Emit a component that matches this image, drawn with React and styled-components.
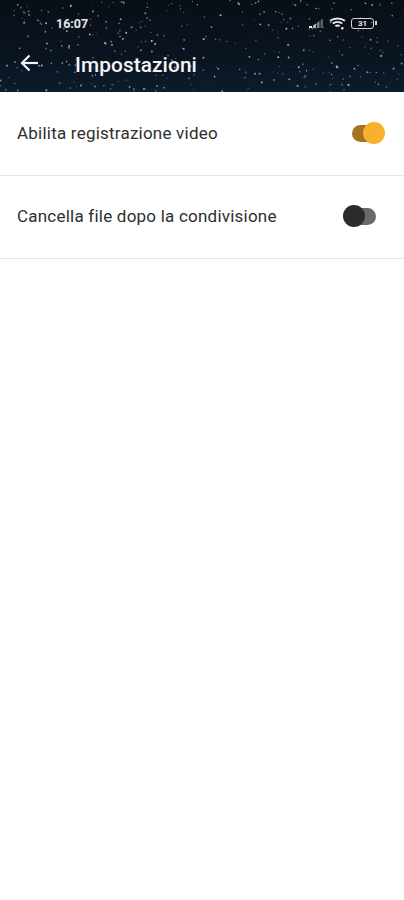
import React from "react"
import styled, { createGlobalStyle } from "styled-components"

const GlobalStyle = createGlobalStyle`
  html, body {
    margin: 0;
    padding: 0;
    background: #fff;
    font-family: "Roboto", "Liberation Sans", sans-serif;
  }
`
const Screen = styled.div`
  width: 404px;
  height: 900px;
  background: #fff;
  overflow: hidden;
`
const Header = styled.header`
  position: relative;
  height: 92px;
  overflow: hidden;
  background: linear-gradient(180deg, #090e16 0%, #0a1420 60%, #0c1b2d 100%);
  color: #fff;
`
const StarField = styled.svg`
  position: absolute;
  inset: 0;
  filter: blur(0.5px);
`
const StatusBar = styled.div`
  position: relative;
  height: 46px;
  padding: 0 30px 0 56px;
  display: flex;
  align-items: center;
  justify-content: space-between;
  box-sizing: border-box;
`
const Clock = styled.span`
  font-size: 12.5px;
  font-weight: 700;
  color: #e6e8ea;
`
const StatusIcons = styled.div`
  display: flex;
  align-items: center;
  gap: 5px;
`
const Battery = styled.div`
  width: 21px;
  height: 9px;
  border: 1.5px solid #d4d4d4;
  border-radius: 3px;
  font-size: 8px;
  line-height: 9px;
  font-weight: 700;
  text-align: center;
  color: #e4e4e4;
  position: relative;
  &::after {
    content: "";
    position: absolute;
    right: -4px;
    top: 2.5px;
    width: 2px;
    height: 4px;
    background: #d4d4d4;
  }
`
const Toolbar = styled.div`
  position: relative;
  display: flex;
  align-items: center;
  padding-left: 20px;
  gap: 36px;
  height: 34px;
`
const BackButton = styled.svg`
  display: block;
  flex: none;
`
const Title = styled.h1`
  margin: 3px 0 0;
  font-size: 20.8px;
  font-weight: 500;
  letter-spacing: 0.1px;
  color: #f4f4f4;
`
const List = styled.div`
  padding-top: 1px;
`
const Row = styled.div`
  height: 83px;
  box-sizing: border-box;
  padding: 0 28px 2px 17px;
  display: flex;
  align-items: center;
  justify-content: space-between;
  border-bottom: 1.5px solid #e6e6e6;
`
const Label = styled.span`
  font-size: 17px;
  letter-spacing: 0.22px;
  color: #2e2e2e;
`
const Switch = styled.div`
  position: relative;
  width: 24px;
  height: 17px;
  border-radius: 9px;
  background: ${p => p.$on ? "#a37420" : "#6a6a6a"};
`
const Thumb = styled.div`
  position: absolute;
  top: -2.5px;
  width: 22px;
  height: 22px;
  border-radius: 50%;
  left: ${p => p.$on ? "11px" : "-9px"};
  background: ${p => p.$on ? "#f7b12c" : "#2b2b2b"};
`

// fixed seed so the sky is the same on every render
const makeStars = () => {
  let seed = 4711
  const rnd = () => {
    seed = (seed * 16807) % 2147483647
    return seed / 2147483647
  }
  return Array.from({ length: 340 }, () => ({
    x: rnd() * 404,
    y: rnd() * 92,
    r: 0.5 + rnd() * 0.6,
    o: 0.2 + rnd() * 0.6,
  }))
}
const stars = makeStars()

const App = () => (
  <Screen>
    <GlobalStyle />
    <Header>
      <StarField width="404" height="92" viewBox="0 0 404 92">
        {stars.map((s, i) => (
          <circle key={i} cx={s.x} cy={s.y} r={s.r} fill="#dfe6ee" opacity={s.o} />
        ))}
      </StarField>
      <StatusBar>
        <Clock>16:07</Clock>
        <StatusIcons>
          <svg width="16" height="11" viewBox="0 0 16 11">
            <path d="M1 10h3V8H1z" fill="#f0f0f0" />
            <path d="M5 10h3V5.500L5 7.500z" fill="#b4b4b4" />
            <path d="M9 10h2.500V3L9 4.800z" fill="#808080" />
            <path d="M12.500 10H15V0.500L12.500 2.200z" fill="#5e5e5e" />
          </svg>
          <svg width="17" height="13" viewBox="0 0 16 12" fill="none" stroke="#e8e8e8" strokeWidth="1.800">
            <path d="M1 3.500c4-3 10-3 14 0" />
            <path d="M3.500 6c2.600-2 6.400-2 9 0" />
            <path d="M6 8.500c1.200-.8 2.800-.8 4 0" />
            <circle cx="12.500" cy="10.500" r="1.200" fill="#e8e8e8" stroke="none" />
          </svg>
          <Battery>31</Battery>
        </StatusIcons>
      </StatusBar>
      <Toolbar>
        <BackButton width="19" height="18" viewBox="0 0 19 18" fill="none" stroke="#f4f4f4" strokeWidth="2.200">
          <path d="M18 9H2" />
          <path d="M9.500 1.500 2 9l7.500 7.500" />
        </BackButton>
        <Title>Impostazioni</Title>
      </Toolbar>
    </Header>
    <List>
      <Row>
        <Label>Abilita registrazione video</Label>
        <Switch $on><Thumb $on /></Switch>
      </Row>
      <Row>
        <Label>Cancella file dopo la condivisione</Label>
        <Switch><Thumb /></Switch>
      </Row>
    </List>
  </Screen>
)

export default App
